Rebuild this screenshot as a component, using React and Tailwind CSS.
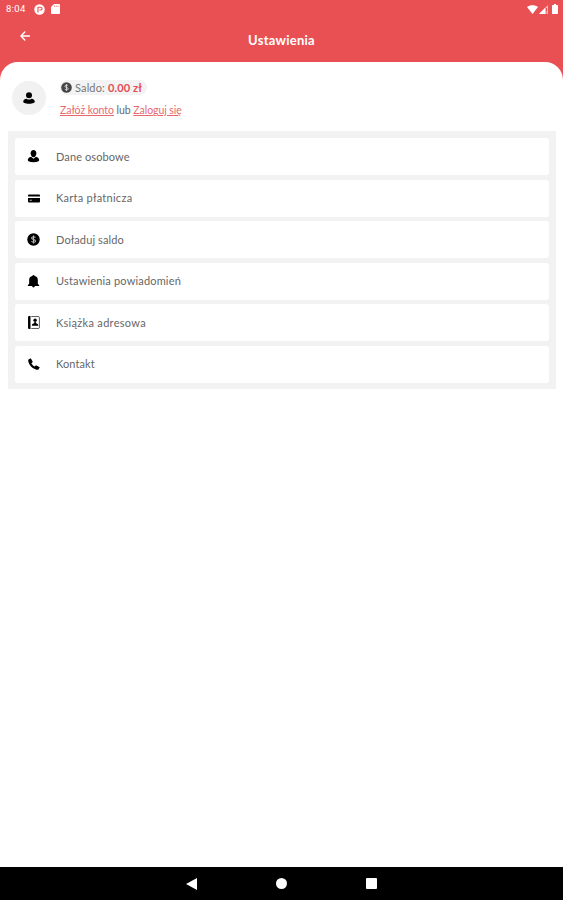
import React from "react";

const CoinIcon = ({ className, hole }) => (
  <svg viewBox="0 0 24 24" className={className}>
    <circle cx="12" cy="12" r="11.5" fill="currentColor" />
    <path d="M15.5 8.5c-.6-1.2-1.800-1.700-3.500-1.700-2 0-3.500.9-3.500 2.500 0 3.700 7.200 1.700 7.200 5.300 0 1.700-1.600 2.600-3.700 2.600-1.900 0-3.200-.8-3.700-2.100M12 4.500v15" fill="none" stroke={hole} strokeWidth="2" />
  </svg>
);

const UserIcon = ({ className }) => (
  <svg viewBox="0 0 24 24" className={className} fill="currentColor">
    <circle cx="12" cy="6.500" r="6" />
    <path d="M7 13.500c3 2.300 7 2.300 10 0 4 .5 6.500 2.500 6.500 5.500 0 2.500-3 4.500-11.500 4.500S.5 21.500.5 19c0-3 2.500-5 6.500-5.500z" />
  </svg>
);

const PersonalIcon = () => (
  <svg viewBox="0 0 24 24" className="size-[13px]" fill="currentColor">
    <path d="M12 0c3.500 0 5.300 2.400 5.300 5.900 0 3.600-2.300 7.400-5.300 7.400S6.700 9.500 6.700 5.900C6.700 2.400 8.500 0 12 0z" />
    <path d="M7.500 12.500 12 16l4.500-3.500c3.800.7 6 3.200 6 6 0 2.500-3 4-10.500 4s-10.500-1.500-10.500-4c0-2.800 2.200-5.300 6-6z" />
  </svg>
);

const CardIcon = () => (
  <svg viewBox="0 0 24 18" className="h-[9px] w-3" fill="currentColor">
    <path d="M2 1h20a2 2 0 0 1 2 2v2H0V3a2 2 0 0 1 2-2zM0 8h24v7a2 2 0 0 1-2 2H2a2 2 0 0 1-2-2z" />
    <path d="M3.500 12.500h4" stroke="#fff" strokeWidth="1.500" />
  </svg>
);

const BellIcon = () => (
  <svg viewBox="0 0 24 24" className="size-[13px]" fill="currentColor">
    <path d="M10 2a2 2 0 0 1 4 0c4 .8 6 3.500 6 7v7l2.500 3v1.500h-21V19L4 16V9c0-3.500 2-6.200 6-7zM9.500 20.500h5a2.500 2.500 0 0 1-5 0z" />
  </svg>
);

const BookIcon = () => (
  <svg viewBox="0 0 22 24" className="h-[13px] w-3" fill="currentColor">
    <path d="M0 2a2 2 0 0 1 2-2h2.500v24H2a2 2 0 0 1-2-2z" />
    <path d="M6 1h13a2 2 0 0 1 2 2v18a2 2 0 0 1-2 2H6" fill="none" stroke="currentColor" strokeWidth="1.200" />
    <circle cx="13" cy="8" r="3.200" />
    <path d="M11.500 11h3v2.500c2.800.4 4.500 1.500 4.500 4.500H7c0-3 1.700-4.100 4.500-4.500z" />
  </svg>
);

const PhoneIcon = () => (
  <svg viewBox="0 0 24 24" className="size-3" fill="currentColor">
    <path d="M1 3 5.500.5 9.700 8 6.800 10.600c1.500 3 3.700 5.100 6.600 6.600L16 14.300l7.500 4.200L21 23c-1 .7-2 .8-3.500.5C9 21.500 2.500 15 .5 6.500.2 5 .3 4 1 3z" />
  </svg>
);

const items = [
  { label: "Dane osobowe", icon: <PersonalIcon />, track: "tracking-[0.1px]" },
  { label: "Karta płatnicza", icon: <CardIcon />, track: "tracking-[0.27px]" },
  { label: "Doładuj saldo", icon: <CoinIcon className="size-[13px]" hole="#bbb" />, track: "tracking-[0.12px]" },
  { label: "Ustawienia powiadomień", icon: <BellIcon />, track: "tracking-[0.17px]" },
  { label: "Książka adresowa", icon: <BookIcon />, track: "tracking-[0.3px]" },
  { label: "Kontakt", icon: <PhoneIcon />, track: "tracking-[0.1px]" },
];

export default function App() {
  return (
    <div className="flex h-[900px] w-[563px] flex-col overflow-hidden bg-[#e95053] font-['Lato',sans-serif]">
      <div className="flex h-[18px] shrink-0 items-center pr-[5px] pl-[6px] text-white">
        <span className="w-[28px] font-['Roboto',sans-serif] text-[9.5px] leading-none tracking-[0.35px] whitespace-nowrap">8:04</span>
        <svg viewBox="0 0 22 22" className="size-[11px]">
          <circle cx="11" cy="11" r="10.500" fill="#fff" />
          <path d="M8 17V6.500h5.500a2.700 2.700 0 0 1 0 5.400H11" fill="none" stroke="#e95053" strokeWidth="2.200" />
        </svg>
        <svg viewBox="0 0 18 20" className="ml-[6px] h-[10px] w-[9px]">
          <path d="M6 0h10a2 2 0 0 1 2 2v16a2 2 0 0 1-2 2H2a2 2 0 0 1-2-2V6z" fill="#fff" />
          <path d="M7 3v3M10.500 3v3M14 3v3" stroke="#e95053" strokeWidth="1.200" />
        </svg>
        <svg viewBox="0 0 22 18" className="ml-auto h-[9px] w-[11px]" fill="#fff">
          <path d="M0 4C6-1 16-1 22 4L11 18z" />
        </svg>
        <svg viewBox="0 0 18 18" className="ml-px h-[9px] w-[9px]">
          <path d="M0 18 18 0v18z" fill="#fff" fillOpacity=".6" />
          <path d="M0 18 12 6v12z" fill="#fff" />
          <path d="M15 6v7M15 15v2" stroke="#e95053" strokeWidth="2" />
        </svg>
        <svg viewBox="0 0 12 20" className="ml-[4px] h-[10px] w-[6px]" fill="#fff">
          <path d="M4 0h4v2h2.500A1.500 1.500 0 0 1 12 3.500v15a1.500 1.500 0 0 1-1.500 1.500h-9A1.500 1.500 0 0 1 0 18.500v-15A1.500 1.500 0 0 1 1.500 2H4z" />
        </svg>
      </div>

      <header className="grid h-[44px] shrink-0 grid-cols-[1fr_auto_1fr] items-start text-white">
        <svg viewBox="0 0 20 20" className="mt-[13px] ml-5 size-[10px]" fill="none" stroke="currentColor" strokeWidth="3" strokeLinecap="round" strokeLinejoin="round">
          <path d="M19 10H2M9.500 2 2 10l7.500 8" />
        </svg>
        <h1 className="mt-[14px] text-[13px] leading-[17px] font-bold tracking-[0.25px]">Ustawienia</h1>
      </header>

      <main className="flex-1 rounded-t-[18px] bg-white">
        <section className="flex h-[69px] pt-[18px] pl-3">
          <div className="mt-px flex size-[34px] items-center justify-center rounded-full bg-[#f1f1f1]">
            <UserIcon className="size-3 text-black" />
          </div>
          <div className="ml-[14px] text-[11px] leading-[14px]">
            <div className="flex h-[15px] w-[87px] items-center rounded-full bg-[#f3f3f3] pl-px">
              <CoinIcon className="size-[11px] text-[#454545]" hole="#ddd" />
              <span className="ml-[3px] tracking-[0.14px] whitespace-nowrap text-[#777]">Saldo: <b className="text-[#e54c55]">0.00 zł</b></span>
            </div>
            <p className="mt-[8px] text-[10.5px] tracking-[-0.05px] whitespace-nowrap text-[#666]">
              <a className="text-[#e8686e] underline">Załóż konto</a> lub <a className="text-[#e8686e] underline">Zaloguj się</a>
            </p>
          </div>
        </section>

        <nav className="mr-[7px] ml-2 flex h-[258px] flex-col gap-[4.5px] bg-[#f2f2f2] pt-[7px] pr-[7px] pl-[7px]">
          {items.map(({ label, icon, track }) => (
            <div key={label} className="flex h-[37px] shrink-0 items-center rounded-[3px] bg-white">
              <div className="ml-3 flex w-[13px] justify-center text-black">{icon}</div>
              <span className={"ml-4 text-[11px] leading-[14px] whitespace-nowrap text-[#666] " + track}>{label}</span>
            </div>
          ))}
        </nav>
      </main>

      <footer className="flex h-[33px] shrink-0 items-center justify-center gap-[79px] bg-black">
        <svg viewBox="0 0 11 12" className="h-3 w-[11px]" fill="#fff"><path d="M0 6 11 0v12z" /></svg>
        <div className="size-[11px] rounded-full bg-white" />
        <div className="size-[11px] rounded-[1px] bg-white" />
      </footer>
    </div>
  );
}
